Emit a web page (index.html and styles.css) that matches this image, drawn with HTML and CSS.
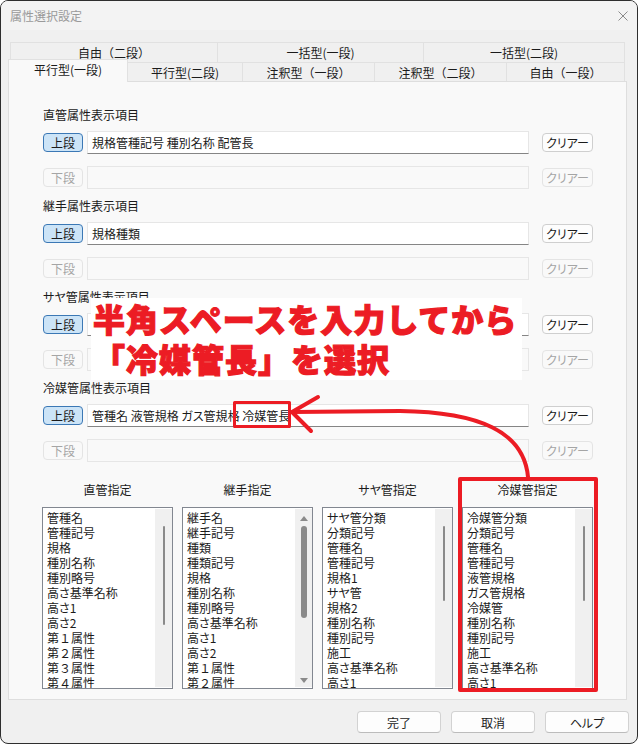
FILE: index.html
```html
<!DOCTYPE html>
<html>
	<head>
		<meta charset="utf-8">
		<title>属性選択設定</title>
		<link rel="stylesheet" href="styles.css">
	</head>
	<body>
		<div class="win">
			<div class="titlebar">
				<span class="title">属性選択設定</span>
				<svg class="close" width="10" height="10" viewBox="0 0 10 10"><path d="M0.5 0.5L9.5 9.5M9.5 0.5L0.5 9.5" stroke="#8a8a8a" stroke-width="1" fill="none"/></svg>
			</div>
			<div class="tabs">
				<div class="tabrow top">
					<div class="tab">自由（二段）</div>
					<div class="tab">一括型(一段)</div>
					<div class="tab">一括型(二段)</div>
				</div>
				<div class="tabrow bot">
					<div class="tab on">平行型(一段)</div>
					<div class="tab">平行型(二段)</div>
					<div class="tab">注釈型（一段）</div>
					<div class="tab">注釈型（二段）</div>
					<div class="tab">自由（一段）</div>
				</div>
			</div>
			<div class="panel">
				<div class="sec">
					<div class="sec-label">直管属性表示項目</div>
					<div class="row">
						<span class="seg">上段</span>
						<span class="field">規格管種記号 種別名称 配管長</span>
						<span class="clr">クリアー</span>
					</div>
					<div class="row off">
						<span class="seg">下段</span>
						<span class="field"></span>
						<span class="clr">クリアー</span>
					</div>
				</div>
				<div class="sec">
					<div class="sec-label">継手属性表示項目</div>
					<div class="row">
						<span class="seg">上段</span>
						<span class="field">規格種類</span>
						<span class="clr">クリアー</span>
					</div>
					<div class="row off">
						<span class="seg">下段</span>
						<span class="field"></span>
						<span class="clr">クリアー</span>
					</div>
				</div>
				<div class="sec">
					<div class="sec-label">サヤ管属性表示項目</div>
					<div class="row">
						<span class="seg">上段</span>
						<span class="field"></span>
						<span class="clr">クリアー</span>
					</div>
					<div class="row off">
						<span class="seg">下段</span>
						<span class="field"></span>
						<span class="clr">クリアー</span>
					</div>
				</div>
				<div class="sec">
					<div class="sec-label">冷媒管属性表示項目</div>
					<div class="row">
						<span class="seg">上段</span>
						<span class="field">管種名 液管規格 ガス管規格 冷媒管長</span>
						<span class="clr">クリアー</span>
					</div>
					<div class="row off">
						<span class="seg">下段</span>
						<span class="field"></span>
						<span class="clr">クリアー</span>
					</div>
				</div>

				<div class="lists">
					<div class="col">
						<div class="col-label">直管指定</div>
						<div class="box">
							<ul class="items">
								<li>管種名</li><li>管種記号</li><li>規格</li><li>種別名称</li><li>種別略号</li><li>高さ基準名称</li>
								<li>高さ1</li><li>高さ2</li><li class="fw">第１属性</li><li class="fw">第２属性</li><li class="fw">第３属性</li><li class="fw">第４属性</li>
							</ul>
							<div class="sb"><div class="thumb long"></div></div>
						</div>
					</div>
					<div class="col">
						<div class="col-label">継手指定</div>
						<div class="box">
							<ul class="items">
								<li>継手名</li><li>継手記号</li><li>種類</li><li>種類記号</li><li>規格</li><li>種別名称</li>
								<li>種別略号</li><li>高さ基準名称</li><li>高さ1</li><li>高さ2</li><li class="fw">第１属性</li><li class="fw">第２属性</li>
							</ul>
							<div class="sb hover">
								<div class="arr up"></div>
								<div class="thumb"></div>
								<div class="arr down"></div>
							</div>
						</div>
					</div>
					<div class="col">
						<div class="col-label">サヤ管指定</div>
						<div class="box">
							<ul class="items">
								<li>サヤ管分類</li><li>分類記号</li><li>管種名</li><li>管種記号</li><li>規格1</li><li>サヤ管</li>
								<li>規格2</li><li>種別名称</li><li>種別記号</li><li>施工</li><li>高さ基準名称</li><li>高さ1</li>
							</ul>
							<div class="sb"><div class="thumb"></div></div>
						</div>
					</div>
					<div class="col">
						<div class="col-label">冷媒管指定</div>
						<div class="box">
							<ul class="items">
								<li>冷媒管分類</li><li>分類記号</li><li>管種名</li><li>管種記号</li><li>液管規格</li><li>ガス管規格</li>
								<li>冷媒管</li><li>種別名称</li><li>種別記号</li><li>施工</li><li>高さ基準名称</li><li>高さ1</li>
							</ul>
							<div class="sb"><div class="thumb"></div></div>
						</div>
					</div>
				</div>
			</div>
			<div class="foot">
				<span class="btn">完了</span>
				<span class="btn">取消</span>
				<span class="btn">ヘルプ</span>
			</div>

			<!-- 注釈 -->
			<div class="note">半角スペースを入力してから<br>「冷媒管長」を選択</div>
			<svg class="marks" width="638" height="744" viewBox="0 0 638 744">
				<g fill="none" stroke="#ec1c24" stroke-linecap="round" stroke-linejoin="round">
					<rect x="234.5" y="402.5" width="55" height="24" stroke-width="3" stroke-linecap="butt"/>
					<rect x="460" y="479" width="136" height="211" stroke-width="4" stroke-linecap="butt"/>
					<path d="M293 412 L400 411 C480 412 524 432 528 477" stroke-width="4"/>
					<path d="M318 397 L292 412 L311 431" stroke-width="4"/>
				</g>
			</svg>
		</div>
	</body>
</html>
```

FILE: styles.css
```css
*{margin:0;padding:0;box-sizing:border-box;}
ul{list-style:none;}
body{background:#fff;font-family:"Noto Sans CJK JP","Noto Sans",sans-serif;font-size:12px;color:#1b1b1b;}

.win{
	position:relative;
	width:638px;
	height:744px;
	border:1px solid #2e2e2e;
	border-radius:8px;
	background:#f0f0f0;
	overflow:hidden;
	display:flex;
	flex-direction:column;
	font-feature-settings:"palt";
}
.titlebar{height:29px;display:flex;align-items:center;justify-content:space-between;padding:0 9px 0 9px;background:#f3f3f3;color:#9a9a9a;}
.close{display:block;}

.tabs{margin-top:12px;}
.tabrow{display:grid;height:20px;}
.tabrow.top{margin-left:9px;grid-template-columns:208px 206px 201px;}
.tabrow.bot{margin-left:7px;grid-template-columns:120px 115px 132px 132px 118px;}
.tab{display:flex;align-items:center;justify-content:center;border-top:1px solid #e1e1e1;border-right:1px solid #e1e1e1;background:#f0f0f0;line-height:16px;font-feature-settings:normal;}
.tab:first-child{border-left:1px solid #e1e1e1;}
.tab.on{background:#f9f9f9;height:23px;margin-top:-3px;position:relative;z-index:1;padding-bottom:3px;}

.panel{margin:-1px 0 0 7px;width:619px;height:619px;border:1px solid #dedede;background:#f9f9f9;padding:25px 0 0 34px;}
.sec{padding-bottom:9px;}
.sec-label{line-height:16px;margin-bottom:8px;}
.row{display:flex;align-items:center;height:23px;}
.row + .row{margin-top:12px;}
.seg{width:40px;height:19px;display:flex;align-items:center;justify-content:center;border:1px solid #3b78b5;border-radius:4px;background:#cce4f7;}
.field{width:442px;height:23px;margin-left:4px;padding-left:4px;display:flex;align-items:center;white-space:nowrap;background:#fff;border:1px solid #e6e6e6;border-bottom-color:#858585;}
.clr{width:51px;height:19px;margin-left:13px;display:flex;align-items:center;justify-content:center;border:1px solid #cfcfcf;border-radius:4px;background:#fdfdfd;}
.row.off .seg{background:#f9f9f9;border-color:#e4e4e4;color:#a5a5a5;}
.row.off .field{background:#f9f9f9;border-color:#e6e6e6;}
.row.off .clr{background:#f9f9f9;border-color:#e4e4e4;color:#a5a5a5;}

.lists{display:grid;grid-template-columns:repeat(4,131px);column-gap:9px;margin:11px 0 0 -1px;}
.col-label{line-height:16px;text-align:center;margin-bottom:9px;}
.box{display:flex;height:182px;border:1px solid #828790;background:#fff;}
.items{flex:1;padding:2px 0 0 4px;line-height:15px;overflow:hidden;white-space:nowrap;}
.items .fw{font-feature-settings:normal;}
.sb{width:17px;margin:1px 0;background:#f0f0f0;display:flex;flex-direction:column;align-items:center;}
.thumb{width:2px;height:75px;margin-top:17px;background:#8a8a8a;border-radius:1px;}
.thumb.long{height:99px;}
.sb.hover .thumb{width:6px;height:92px;margin-top:5px;border-radius:3px;}
.arr{width:0;height:0;border-left:4px solid transparent;border-right:4px solid transparent;}
.arr.up{margin-top:7px;border-bottom:5px solid #8a8a8a;}
.arr.down{margin-top:auto;margin-bottom:4px;border-top:5px solid #8a8a8a;}

.foot{display:flex;justify-content:flex-end;gap:10px;padding:11px 8px 0 0;}
.btn{width:84px;height:22px;display:flex;align-items:center;justify-content:center;border:1px solid #d2d2d2;border-bottom-color:#bcbcbc;border-radius:4px;background:#fdfdfd;}

.note{
	position:absolute;
	left:90px;
	top:297px;
	width:431px;
	height:82px;
	padding-left:2px;
	background:#fff;
	color:#ec1c24;
	font-size:32px;
	line-height:40px;
	font-weight:900;
	letter-spacing:1px;
	-webkit-text-stroke:1.2px #ec1c24;
	white-space:nowrap;
	font-feature-settings:normal;
}
.marks{position:absolute;left:-1px;top:-1px;}
```
